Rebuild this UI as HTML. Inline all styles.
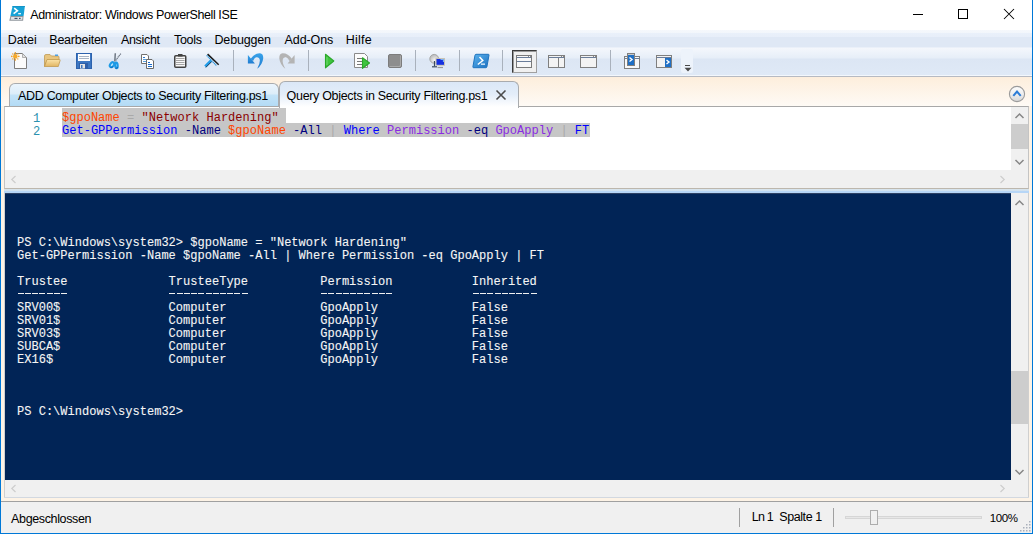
<!DOCTYPE html>
<html><head><meta charset="utf-8">
<style>
*{margin:0;padding:0;box-sizing:border-box}
html,body{width:1033px;height:534px;overflow:hidden;background:#fff;font-family:"Liberation Sans",sans-serif;font-size:12px;color:#000}
.a{position:absolute}
.mono{font-family:"Liberation Mono",monospace;font-size:12.04px;white-space:pre;line-height:13px}
#title{left:0;top:0;width:1033px;height:30px;background:#fff}
#menu{left:1px;top:30px;width:1031px;height:18px;background:linear-gradient(#f5f8fc 0,#f2f6fb 3px,#e9f0fa 3px,#e7eef9 7px,#dfe8f5 7px,#dfe8f5 17px,#eaf0f9 17px)}
#tool{left:1px;top:48px;width:1031px;height:28px;background:linear-gradient(#f4f7fc 0,#e6eef8 10px,#dce6f4 11px,#dfe9f6 27px,#f3f7fc 27px)}
#toolline{left:1px;top:76px;width:1031px;height:1px;background:#b6bac2}
#cream{left:1px;top:77px;width:1031px;height:424px;background:linear-gradient(#fdeedc 0,#fefaf5 29px,#fefaf5 100%)}
#cream2{left:1px;top:106px;width:1031px;height:395px;background:#fdf3e6}
#statline{left:1px;top:501px;width:1031px;height:1px;background:#a0a0a0}
#status{left:1px;top:502px;width:1031px;height:31px;background:#f0f0f0}
.bl{background:#0078d7}
.ui{font-size:12.5px;line-height:20px;white-space:pre;color:#000}
</style></head><body>
<div class="a" id="title"></div>
<div class="a" id="menu"></div>
<div class="a" id="tool"></div>
<div class="a" id="toolline"></div>
<div class="a" id="cream"></div>
<div class="a" id="cream2"></div>
<div class="a" id="statline"></div>
<div class="a" id="status"></div>


<!-- title -->
<svg class="a" style="left:5px;top:3px" width="24" height="22" viewBox="0 0 24 22">
<path d="M7.6 3 L19.9 3 L18.6 12.9 L5.4 12.9 Z" fill="#17a2d6"/>
<path d="M7.6 3 L19.9 3 L19.7 4 L7.3 4 Z" fill="#1494c8"/>
<path d="M5.4 12.9 L18.6 12.9 L18.1 17.8 L4.3 17.8 Z" fill="#8f969c"/>
<path d="M6.2 13.9 L17.5 13.9 L17.2 16.8 L5.8 16.8 Z" fill="#dfe3e7"/>
<rect x="9.5" y="14.8" width="3" height="1.2" fill="#3d4f6a"/>
<rect x="14" y="14.8" width="1.6" height="1.2" fill="#3d4f6a"/>
<path d="M9.2 5.2 L12.4 7.8 L8.6 10.6" fill="none" stroke="#fff" stroke-width="1.6"/>
<rect x="13.2" y="10.1" width="2.8" height="1.2" fill="#fff"/>
</svg>
<div class="a ui" style="left:30.3px;top:5px;letter-spacing:-0.394px">Administrator: Windows PowerShell ISE</div>
<div class="a" style="left:913px;top:14px;width:10px;height:1px;background:#000"></div>
<div class="a" style="left:958px;top:9px;width:10px;height:10px;border:1px solid #000"></div>
<svg class="a" style="left:1003px;top:8px" width="12" height="12" viewBox="0 0 12 12"><path d="M1 1 L11 11 M11 1 L1 11" stroke="#000" stroke-width="1.05"/></svg>

<!-- menu -->
<div class="a ui" style="left:7.7px;top:30px;letter-spacing:-0.05px">Datei</div>
<div class="a ui" style="left:49.3px;top:30px;letter-spacing:-0.244px">Bearbeiten</div>
<div class="a ui" style="left:121px;top:30px;letter-spacing:-0.333px">Ansicht</div>
<div class="a ui" style="left:173.9px;top:30px;letter-spacing:-0.25px">Tools</div>
<div class="a ui" style="left:214.5px;top:30px;letter-spacing:-0.171px">Debuggen</div>
<div class="a ui" style="left:284.6px;top:30px;letter-spacing:-0.1px">Add-Ons</div>
<div class="a ui" style="left:345.7px;top:30px;letter-spacing:0.25px">Hilfe</div>


<!-- toolbar icons -->
<!-- new -->
<svg class="a" style="left:8px;top:50px" width="24" height="22" viewBox="0 0 24 22">
<path d="M6.5 3.5 H14.5 L18.5 7.5 V18.5 H6.5 Z" fill="#fbfbfb" stroke="#7d7d7d" stroke-width="1"/>
<path d="M14.5 3.5 V7.5 H18.5 Z" fill="#e2e2e2" stroke="#a0a0a0" stroke-width="0.8"/>
<circle cx="7.3" cy="6.4" r="2.3" fill="#f7a928"/>
<g fill="#f29a18"><circle cx="7.3" cy="2.9" r="0.8"/><circle cx="7.3" cy="9.9" r="0.8"/><circle cx="3.8" cy="6.4" r="0.8"/><circle cx="10.8" cy="6.4" r="0.8"/>
<circle cx="4.8" cy="3.9" r="0.7"/><circle cx="9.8" cy="3.9" r="0.7"/><circle cx="4.8" cy="8.9" r="0.7"/><circle cx="9.8" cy="8.9" r="0.7"/></g>
</svg>
<!-- open -->
<svg class="a" style="left:40px;top:50px" width="24" height="22" viewBox="0 0 24 22">
<defs><linearGradient id="fg" x1="0" y1="0" x2="0" y2="1"><stop offset="0" stop-color="#fbe3a8"/><stop offset="1" stop-color="#e1b562"/></linearGradient></defs>
<path d="M4.5 6 Q4.5 4.5 6 4.5 H10 L11.5 6 H18 Q19 6 19 7 V10 H7 L4.5 16.5 Z" fill="#e8c57f" stroke="#bf9a55" stroke-width="0.8"/>
<rect x="15" y="4.5" width="3" height="1.5" fill="#4d9ee0"/>
<path d="M7 9.5 H19.5 Q20.5 9.5 20 10.8 L18.3 16.5 H4.5 Z" fill="url(#fg)" stroke="#c29a50" stroke-width="0.8"/>
</svg>
<!-- save -->
<svg class="a" style="left:72px;top:50px" width="24" height="22" viewBox="0 0 24 22">
<rect x="4.5" y="3.5" width="15" height="15" fill="#3b76c2" stroke="#2d62ad" stroke-width="1"/>
<rect x="6" y="4" width="12" height="7" fill="#fdfdfd"/>
<path d="M7 6.5 H17 M7 8.5 H17" stroke="#a8b4c4" stroke-width="1"/>
<rect x="7" y="13" width="9" height="5.5" fill="#2e5fa8"/>
<rect x="8" y="14" width="5" height="4.5" fill="#e4e4e4"/>
<rect x="9" y="15" width="1.5" height="3" fill="#3b76c2"/>
</svg>
<!-- cut -->
<svg class="a" style="left:104px;top:50px" width="24" height="22" viewBox="0 0 24 22">
<path d="M11.3 3.3 L10.8 11.5" stroke="#6f7884" stroke-width="1.5"/>
<path d="M16.8 3.6 L11.6 10.5" stroke="#6f7884" stroke-width="1.3" stroke-dasharray="1.2 0.6"/>
<ellipse cx="8" cy="14.7" rx="1.8" ry="2.7" fill="#bfe6fb" stroke="#1d9ae6" stroke-width="2.1" transform="rotate(38 8 14.7)"/>
<ellipse cx="12.4" cy="15.4" rx="1.3" ry="2.8" fill="#bfe6fb" stroke="#1d9ae6" stroke-width="2.1" transform="rotate(-5 12.4 15.4)"/>
<path d="M6.5 17.5 Q7.5 18 9 16.5" stroke="#1050a0" stroke-width="0.7" fill="none"/>
<path d="M11.5 18.3 Q12.8 18.8 13.8 17" stroke="#1050a0" stroke-width="0.7" fill="none"/>
</svg>
<!-- copy -->
<svg class="a" style="left:136px;top:50px" width="24" height="22" viewBox="0 0 24 22">
<path d="M5.5 4.5 H11 L12.5 6 V13.5 H5.5 Z" fill="#fff" stroke="#707070" stroke-width="1"/>
<rect x="7" y="7" width="2" height="1" fill="#2a78d0"/>
<rect x="7" y="9" width="4" height="1" fill="#5aa0dc"/>
<rect x="7" y="11" width="4" height="1" fill="#5aa0dc"/>
<path d="M10.5 9.5 H16 L17.5 11 V18.5 H10.5 Z" fill="#fff" stroke="#6a6a6a" stroke-width="1"/>
<rect x="12" y="12" width="2" height="1" fill="#1a6acb"/>
<rect x="12" y="14" width="4" height="1" fill="#1a6acb"/>
<rect x="12" y="16" width="4" height="1" fill="#1a6acb"/>
</svg>
<!-- paste -->
<svg class="a" style="left:168px;top:50px" width="24" height="22" viewBox="0 0 24 22">
<rect x="6.75" y="5.75" width="11" height="11.5" rx="1" fill="#f8f8f8" stroke="#424242" stroke-width="1.5"/>
<rect x="10" y="4" width="4.5" height="2.5" fill="#424242"/>
<path d="M8 8.5 H16.5 M8 10.5 H16.5 M8 12.5 H16.5 M8 14.5 H16.5" stroke="#9a9a9a" stroke-width="0.9"/>
</svg>
<!-- clear -->
<svg class="a" style="left:200px;top:50px" width="24" height="22" viewBox="0 0 24 22">
<path d="M7.6 4.1 L18.7 14.8" stroke="#1a1a1a" stroke-width="1.5"/>
<path d="M6.6 5.3 L16.6 15.8" stroke="#2b96dc" stroke-width="1.2" stroke-dasharray="1.3 0.5"/>
<path d="M11.2 10.5 L5.2 16.5" stroke="#1f9be8" stroke-width="2.6"/>
<path d="M11.6 11.6 L5.8 17.4" stroke="#1a2a40" stroke-width="0.8"/>
</svg>
<div class="a" style="left:233px;top:50px;width:1px;height:21px;background:#a9b1bc"></div>
<!-- undo -->
<svg class="a" style="left:243px;top:50px" width="24" height="22" viewBox="0 0 24 22">
<defs><linearGradient id="ug" x1="0" y1="0" x2="0" y2="1"><stop offset="0" stop-color="#39a3ea"/><stop offset="1" stop-color="#1f7bd0"/></linearGradient></defs>
<path d="M4.9 4.9 L4.9 13.6 L11.9 13.6 Z" fill="url(#ug)"/>
<path d="M7.5 9 Q11.5 3 17 3.2 Q20.5 3.6 20.2 8.5 Q19.5 14.5 14.2 18.8 Q17.2 13.5 16.8 9.8 Q16.5 6.8 13.5 7.2 Q11.5 7.6 10 11 Z" fill="url(#ug)"/>
</svg>
<!-- redo -->
<svg class="a" style="left:275px;top:50px" width="24" height="22" viewBox="0 0 24 22">
<g transform="translate(24.5 0) scale(-1 1)">
<path d="M4.9 4.9 L4.9 13.6 L11.9 13.6 Z" fill="#b4b4b4"/>
<path d="M7.5 9 Q11.5 3 17 3.2 Q20.5 3.6 20.2 8.5 Q19.5 14.5 14.2 18.8 Q17.2 13.5 16.8 9.8 Q16.5 6.8 13.5 7.2 Q11.5 7.6 10 11 Z" fill="#b4b4b4"/>
</g>
</svg>
<div class="a" style="left:308px;top:50px;width:1px;height:21px;background:#a9b1bc"></div>
<!-- run -->
<svg class="a" style="left:318px;top:50px" width="24" height="22" viewBox="0 0 24 22">
<path d="M7.5 4.2 L15.8 11 L7.5 17.8 Z" fill="#3fc43f" stroke="#2aa82a" stroke-width="1.1" stroke-linejoin="round"/>
<path d="M9 7 L9 15" stroke="#7ee07e" stroke-width="0.8"/>
</svg>
<!-- run selection -->
<svg class="a" style="left:350px;top:50px" width="24" height="22" viewBox="0 0 24 22">
<path d="M4.5 3.5 H14.5 L17.5 6.5 V17.5 H4.5 Z" fill="#fcfcfc" stroke="#8a8a8a" stroke-width="1"/>
<path d="M7 8.5 H13 M7 11.5 H13 M7 14.5 H13" stroke="#777" stroke-width="1"/>
<path d="M12.5 7.8 L19.5 13 L12.5 18.3 Z" fill="#3fc43f" stroke="#2aa82a" stroke-width="1.1" stroke-linejoin="round"/>
</svg>
<!-- stop -->
<div class="a" style="left:388px;top:54px;width:14px;height:14px;background:#8d8d8d;border:1px solid #7c7c7c;border-radius:2px;box-shadow:inset -1px -1px 0 #a9a9a9"></div>
<div class="a" style="left:415px;top:50px;width:1px;height:21px;background:#a9b1bc"></div>
<!-- remote -->
<svg class="a" style="left:426px;top:50px" width="24" height="22" viewBox="0 0 24 22">
<defs><radialGradient id="gg" cx="0.6" cy="0.7" r="0.7"><stop offset="0" stop-color="#fafafa"/><stop offset="1" stop-color="#b8b8b8"/></radialGradient></defs>
<circle cx="8.2" cy="8.8" r="4.4" fill="url(#gg)" stroke="#a0a0a0" stroke-width="0.9"/>
<path d="M8.5 11 V16.3" stroke="#3a4a60" stroke-width="1.2"/>
<path d="M6 16.8 H11" stroke="#3a4a60" stroke-width="1.2"/>
<rect x="9.5" y="8" width="9.5" height="7.8" fill="#c8c2b6"/>
<rect x="10.5" y="9" width="7.5" height="5.8" fill="#1530e0"/>
<path d="M14.5 9.5 L17.5 9.5 L17.5 12" stroke="#7ab0f0" stroke-width="1.2" fill="none"/>
<path d="M11.5 17.5 H17" stroke="#9a9a9a" stroke-width="1.2"/>
</svg>
<div class="a" style="left:459px;top:50px;width:1px;height:21px;background:#a9b1bc"></div>
<!-- ps console -->
<svg class="a" style="left:469px;top:50px" width="24" height="22" viewBox="0 0 24 22">
<defs><linearGradient id="pg" x1="0" y1="0" x2="1" y2="1"><stop offset="0" stop-color="#5cb4ee"/><stop offset="1" stop-color="#1a6fc0"/></linearGradient></defs>
<path d="M7 4.3 H19.3 Q20.2 4.3 20 5.2 L17.9 16.8 Q17.7 17.7 16.8 17.7 H4.6 Q3.7 17.7 3.9 16.8 L6 5.2 Q6.2 4.3 7 4.3 Z" fill="url(#pg)" stroke="#1f74bf" stroke-width="1"/>
<path d="M10.5 7 L13.8 10.5 L8.8 14.5" fill="none" stroke="#fff" stroke-width="1.5"/>
<rect x="12" y="13.5" width="4" height="1.3" fill="#e8f2fb"/>
</svg>
<div class="a" style="left:502px;top:50px;width:1px;height:21px;background:#a9b1bc"></div>
<!-- layout pressed -->
<div class="a" style="left:512px;top:50px;width:25px;height:23px;background:#f0f0f0;border:1px solid #3a3a3a;border-right-color:#a0a0a0;border-bottom-color:#a0a0a0;box-shadow:inset 1px 1px 0 #9a9a9a"></div>
<svg class="a" style="left:508px;top:48px" width="32" height="28" viewBox="0 0 32 28">
<rect x="8.5" y="7.5" width="15" height="12" fill="#f8f8f8" stroke="#7a7a7a" stroke-width="1"/>
<path d="M9 9.5 H23" stroke="#6a7d9a" stroke-width="1"/>
<path d="M9 13.5 H23" stroke="#6a7d9a" stroke-width="1"/>
<rect x="20" y="8" width="1" height="1" fill="#888"/><rect x="22" y="8" width="1" height="1" fill="#888"/>
</svg>
<svg class="a" style="left:540px;top:48px" width="32" height="28" viewBox="0 0 32 28">
<rect x="8.5" y="7.5" width="16" height="12" fill="#f3f3f3" stroke="#7f7f7f" stroke-width="1"/>
<path d="M9 9.5 H24" stroke="#6a7d9a" stroke-width="1"/>
<path d="M18.5 10 V19" stroke="#7f7f7f" stroke-width="1"/>
<rect x="21" y="8" width="1" height="1" fill="#888"/><rect x="23" y="8" width="1" height="1" fill="#888"/>
</svg>
<svg class="a" style="left:572px;top:48px" width="32" height="28" viewBox="0 0 32 28">
<rect x="8.5" y="7.5" width="16" height="12" fill="#f3f3f3" stroke="#7f7f7f" stroke-width="1"/>
<path d="M9 9.5 H24" stroke="#6a7d9a" stroke-width="1"/>
<rect x="21" y="8" width="1" height="1" fill="#888"/><rect x="23" y="8" width="1" height="1" fill="#888"/>
</svg>
<div class="a" style="left:610px;top:50px;width:1px;height:21px;background:#a9b1bc"></div>
<svg class="a" style="left:616px;top:48px" width="32" height="28" viewBox="0 0 32 28">
<rect x="8.5" y="8.5" width="15" height="12" fill="#f8f8f8" stroke="#7f7f7f" stroke-width="1"/>
<path d="M9 10.5 H23" stroke="#6a7d9a" stroke-width="1"/>
<rect x="11.5" y="5.5" width="7" height="12" fill="#1f6fc4" stroke="#7f7f7f" stroke-width="1"/>
<path d="M12 6.5 H18" stroke="#c8c8c8" stroke-width="1"/>
<path d="M13.5 9.5 L16 11.5 L13.5 13.5" fill="none" stroke="#fff" stroke-width="1.4"/>
</svg>
<svg class="a" style="left:648px;top:48px" width="32" height="28" viewBox="0 0 32 28">
<rect x="8.5" y="7.5" width="15" height="12" fill="#f3f3f3" stroke="#7f7f7f" stroke-width="1"/>
<rect x="17" y="10" width="6" height="9" fill="#1f6fc4"/>
<path d="M9 9.5 H23" stroke="#6a7d9a" stroke-width="1"/>
<path d="M18.5 12 L21 14 L18.5 16" fill="none" stroke="#fff" stroke-width="1.4"/>
</svg>
<div class="a" style="left:681px;top:49px;width:12px;height:24px;background:#edf3fb;border-radius:2px"></div>
<div class="a" style="left:685px;top:65px;width:5px;height:1px;background:#4a4a4a"></div>
<svg class="a" style="left:684px;top:67px" width="8" height="6" viewBox="0 0 8 6"><path d="M0.5 0.8 H7.5 L4 4.5 Z" fill="#4a4a4a"/></svg>

<!-- tabs -->
<div class="a" style="left:9px;top:83px;width:270px;height:24px;border:1px solid #a9abae;border-bottom:none;border-radius:6px 6px 0 0;background:linear-gradient(#ebf5fd 0,#dcedf9 10px,#c3e3f8 11px,#b3dbf5 22px)"></div>
<div class="a ui" style="left:18.1px;top:86px;letter-spacing:-0.324px">ADD Computer Objects to Security Filtering.ps1</div>
<div class="a" style="z-index:5;left:279px;top:81px;width:240px;height:27px;border:1px solid #a9abae;border-bottom:none;border-radius:6px 6px 0 0;background:linear-gradient(#dbe7f7 0,#e3edf9 12px,#ffffff 25px)"></div>
<div class="a ui" style="z-index:6;left:286.6px;top:86px;letter-spacing:-0.321px">Query Objects in Security Filtering.ps1</div>
<svg class="a" style="z-index:6;left:495px;top:89px" width="12" height="12" viewBox="0 0 12 12"><path d="M1.5 1.5 L10.5 10.5 M10.5 1.5 L1.5 10.5" stroke="#4c4c4c" stroke-width="1.6"/></svg>
<!-- circle button -->
<svg class="a" style="left:1008px;top:85px" width="18" height="18" viewBox="0 0 18 18">
<defs><linearGradient id="cg" x1="0" y1="0" x2="0" y2="1"><stop offset="0" stop-color="#fdfdfd"/><stop offset="0.5" stop-color="#eeeeee"/><stop offset="1" stop-color="#d6d6d6"/></linearGradient></defs>
<circle cx="9" cy="9" r="7.6" fill="url(#cg)" stroke="#9b9b9b" stroke-width="1.1"/>
<path d="M5.3 10.8 L9 6.5 L12.7 10.8" fill="none" stroke="#2b7bd6" stroke-width="2"/>
</svg>

<!-- editor pane -->
<div class="a" style="left:4px;top:106px;width:1025px;height:83px;border:1px solid #c4c4c4;border-top-color:#a8a8a8;border-bottom-color:#bdb7ad;background:#fff"></div>
<div class="a" style="left:1011px;top:107px;width:17px;height:63px;background:#f0f0f0"></div>
<div class="a" style="left:5px;top:170px;width:1023px;height:18px;background:#f0f0f0"></div>
<div class="a" style="left:4px;top:189px;width:1025px;height:2px;background:linear-gradient(#dae5ec,#cfe0f0)"></div>
<div class="a" style="left:4px;top:191px;width:1025px;height:2px;background:#b7d6f6"></div>
<div class="a" style="left:5px;top:193px;width:1006px;height:1px;background:#2d4164"></div>

<!-- console pane -->
<div class="a" style="left:5px;top:194px;width:1006px;height:286px;background:#012456"></div>
<div class="a" style="left:1011px;top:193px;width:17px;height:287px;background:#f0f0f0"></div>
<div class="a" style="left:5px;top:480px;width:1023px;height:17px;background:#f0f0f0"></div>
<div class="a" style="left:4px;top:193px;width:1px;height:305px;background:#cfcfcf"></div>
<div class="a" style="left:1028px;top:193px;width:1px;height:305px;background:#cfcfcf"></div>
<div class="a" style="left:4px;top:497px;width:1025px;height:1px;background:#d2d8e0"></div>

<!-- editor content -->
<div class="a" style="left:62px;top:108px;width:224px;height:15px;background:#c6c6c6"></div>
<div class="a" style="left:62px;top:123px;width:528px;height:14px;background:#c6c6c6"></div>
<div class="a mono" style="left:33px;top:113px;color:#2b91af">1
2</div>
<div class="a mono" id="code" style="left:62px;top:112px;"><span style="color:#ff4500">$gpoName</span> <span style="color:#a9a9a9">=</span> <span style="color:#8b0000">"Network Hardening"</span>
<span style="color:#0000ff">Get-GPPermission</span> <span style="color:#000080">-Name</span> <span style="color:#ff4500">$gpoName</span> <span style="color:#000080">-All</span> <span style="color:#a9a9a9">|</span> <span style="color:#0000ff">Where</span> <span style="color:#8a2be2">Permission</span> <span style="color:#000080">-eq</span> <span style="color:#8a2be2">GpoApply</span> <span style="color:#a9a9a9">|</span> <span style="color:#0000ff">FT</span></div>

<!-- console content -->
<div class="a mono" id="con" style="left:17px;top:237px;color:#f5f5f5;-webkit-text-stroke:0.1px #f5f5f5">PS C:\Windows\system32&gt; $gpoName = "Network Hardening"
Get-GPPermission -Name $gpoName -All | Where Permission -eq GpoApply | FT

Trustee              TrusteeType          Permission           Inherited

SRV00$               Computer             GpoApply             False
SRV01$               Computer             GpoApply             False
SRV03$               Computer             GpoApply             False
SUBCA$               Computer             GpoApply             False
EX16$                Computer             GpoApply             False



PS C:\Windows\system32&gt;</div>


<i class="a" style="left:18px;top:293px;width:6px;height:1px;background:#f0f0f0"></i><i class="a" style="left:25px;top:293px;width:6px;height:1px;background:#f0f0f0"></i><i class="a" style="left:32px;top:293px;width:6px;height:1px;background:#f0f0f0"></i><i class="a" style="left:39px;top:293px;width:6px;height:1px;background:#f0f0f0"></i><i class="a" style="left:47px;top:293px;width:6px;height:1px;background:#f0f0f0"></i><i class="a" style="left:54px;top:293px;width:6px;height:1px;background:#f0f0f0"></i><i class="a" style="left:61px;top:293px;width:6px;height:1px;background:#f0f0f0"></i>
<i class="a" style="left:169px;top:293px;width:6px;height:1px;background:#f0f0f0"></i><i class="a" style="left:177px;top:293px;width:6px;height:1px;background:#f0f0f0"></i><i class="a" style="left:184px;top:293px;width:6px;height:1px;background:#f0f0f0"></i><i class="a" style="left:191px;top:293px;width:6px;height:1px;background:#f0f0f0"></i><i class="a" style="left:198px;top:293px;width:6px;height:1px;background:#f0f0f0"></i><i class="a" style="left:206px;top:293px;width:6px;height:1px;background:#f0f0f0"></i><i class="a" style="left:213px;top:293px;width:6px;height:1px;background:#f0f0f0"></i><i class="a" style="left:220px;top:293px;width:6px;height:1px;background:#f0f0f0"></i><i class="a" style="left:227px;top:293px;width:6px;height:1px;background:#f0f0f0"></i><i class="a" style="left:234px;top:293px;width:6px;height:1px;background:#f0f0f0"></i><i class="a" style="left:242px;top:293px;width:6px;height:1px;background:#f0f0f0"></i>
<i class="a" style="left:321px;top:293px;width:6px;height:1px;background:#f0f0f0"></i><i class="a" style="left:328px;top:293px;width:6px;height:1px;background:#f0f0f0"></i><i class="a" style="left:336px;top:293px;width:6px;height:1px;background:#f0f0f0"></i><i class="a" style="left:343px;top:293px;width:6px;height:1px;background:#f0f0f0"></i><i class="a" style="left:350px;top:293px;width:6px;height:1px;background:#f0f0f0"></i><i class="a" style="left:357px;top:293px;width:6px;height:1px;background:#f0f0f0"></i><i class="a" style="left:364px;top:293px;width:6px;height:1px;background:#f0f0f0"></i><i class="a" style="left:372px;top:293px;width:6px;height:1px;background:#f0f0f0"></i><i class="a" style="left:379px;top:293px;width:6px;height:1px;background:#f0f0f0"></i><i class="a" style="left:386px;top:293px;width:6px;height:1px;background:#f0f0f0"></i>
<i class="a" style="left:473px;top:293px;width:6px;height:1px;background:#f0f0f0"></i><i class="a" style="left:480px;top:293px;width:6px;height:1px;background:#f0f0f0"></i><i class="a" style="left:487px;top:293px;width:6px;height:1px;background:#f0f0f0"></i><i class="a" style="left:495px;top:293px;width:6px;height:1px;background:#f0f0f0"></i><i class="a" style="left:502px;top:293px;width:6px;height:1px;background:#f0f0f0"></i><i class="a" style="left:509px;top:293px;width:6px;height:1px;background:#f0f0f0"></i><i class="a" style="left:516px;top:293px;width:6px;height:1px;background:#f0f0f0"></i><i class="a" style="left:523px;top:293px;width:6px;height:1px;background:#f0f0f0"></i><i class="a" style="left:531px;top:293px;width:6px;height:1px;background:#f0f0f0"></i>
<!-- scrollbar arrows -->
<svg class="a" style="left:1014px;top:112px" width="11" height="8" viewBox="0 0 11 8"><path d="M1.5 6 L5.5 2 L9.5 6" fill="none" stroke="#868686" stroke-width="1.5"/></svg>
<div class="a" style="left:1011px;top:124px;width:17px;height:25px;background:#cdcdcd"></div>
<svg class="a" style="left:1014px;top:158px" width="11" height="8" viewBox="0 0 11 8"><path d="M1.5 2 L5.5 6 L9.5 2" fill="none" stroke="#868686" stroke-width="1.5"/></svg>
<svg class="a" style="left:10px;top:175px" width="8" height="10" viewBox="0 0 8 10"><path d="M5.5 1 L1.8 4.5 L5.5 8" fill="none" stroke="#cdcdcd" stroke-width="1.2"/></svg>
<svg class="a" style="left:999px;top:175px" width="8" height="10" viewBox="0 0 8 10"><path d="M1.5 1 L5.2 4.5 L1.5 8" fill="none" stroke="#cdcdcd" stroke-width="1.2"/></svg>

<svg class="a" style="left:1014px;top:199px" width="11" height="8" viewBox="0 0 11 8"><path d="M1.5 6 L5.5 2 L9.5 6" fill="none" stroke="#868686" stroke-width="1.5"/></svg>
<div class="a" style="left:1011px;top:371px;width:17px;height:53px;background:#cdcdcd"></div>
<svg class="a" style="left:1014px;top:468px" width="11" height="8" viewBox="0 0 11 8"><path d="M1.5 2 L5.5 6 L9.5 2" fill="none" stroke="#868686" stroke-width="1.5"/></svg>
<svg class="a" style="left:10px;top:484px" width="8" height="10" viewBox="0 0 8 10"><path d="M5.5 1 L1.8 4.5 L5.5 8" fill="none" stroke="#cdcdcd" stroke-width="1.2"/></svg>
<svg class="a" style="left:999px;top:484px" width="8" height="10" viewBox="0 0 8 10"><path d="M1.5 1 L5.2 4.5 L1.5 8" fill="none" stroke="#cdcdcd" stroke-width="1.2"/></svg>

<!-- status bar -->
<div class="a ui" style="left:11.1px;top:509px;letter-spacing:-0.367px">Abgeschlossen</div>
<div class="a" style="left:739px;top:508px;width:1px;height:19px;background:#a0a0a0"></div>
<div class="a ui" style="left:751.7px;top:507px;letter-spacing:-0.733px">Ln 1</div>
<div class="a ui" style="left:779.3px;top:507px;letter-spacing:-0.429px">Spalte 1</div>
<div class="a" style="left:833px;top:508px;width:1px;height:19px;background:#a0a0a0"></div>
<div class="a" style="left:845px;top:516px;width:137px;height:3px;background:#e7e7e7;border:1px solid #d6d6d6"></div>
<div class="a" style="left:870px;top:510px;width:8px;height:15px;background:#f0f0f0;border:1px solid #adadad"></div>
<div class="a ui" style="left:989.8px;top:508px;font-size:11.5px;letter-spacing:-0.4px">100%</div>
<svg class="a" style="left:1019px;top:520px" width="13" height="13" viewBox="0 0 13 13"><g fill="#a9b0bb">
<rect x="10" y="1" width="1.5" height="1.5"/><rect x="10" y="4" width="1.5" height="1.5"/><rect x="7" y="4" width="1.5" height="1.5"/>
<rect x="10" y="7" width="1.5" height="1.5"/><rect x="7" y="7" width="1.5" height="1.5"/><rect x="4" y="7" width="1.5" height="1.5"/>
<rect x="10" y="10" width="1.5" height="1.5"/><rect x="7" y="10" width="1.5" height="1.5"/><rect x="4" y="10" width="1.5" height="1.5"/><rect x="1" y="10" width="1.5" height="1.5"/>
</g></svg>

<!-- borders -->
<div class="a bl" style="left:0;top:0;width:1px;height:534px"></div>
<div class="a bl" style="left:1032px;top:0;width:1px;height:534px"></div>
<div class="a bl" style="left:0;top:533px;width:1033px;height:1px"></div>
</body></html>
